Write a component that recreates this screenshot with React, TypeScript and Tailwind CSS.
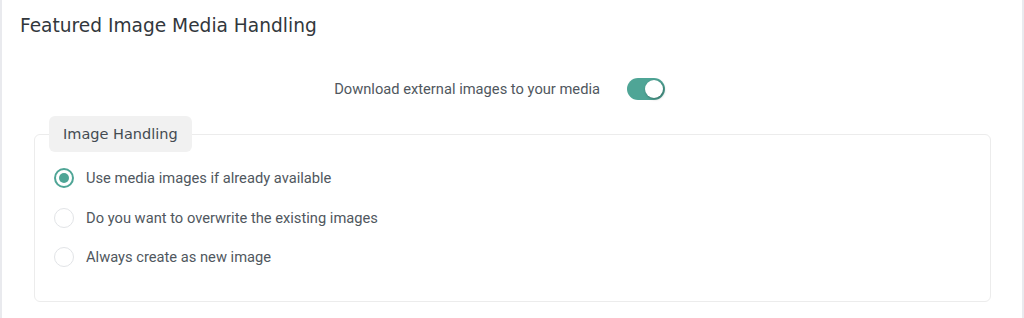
import React from 'react';

const options = [
  { id: 'use', label: 'Use media images if already available' },
  { id: 'overwrite', label: 'Do you want to overwrite the existing images' },
  { id: 'new', label: 'Always create as new image' },
];

const Radio: React.FC<{ checked: boolean }> = ({ checked }) =>
  checked ? (
    <span className="w-5 h-5 rounded-full border-2 border-[#4fa596] flex items-center justify-center shrink-0">
      <span className="w-[10px] h-[10px] rounded-full bg-[#4fa596]" />
    </span>
  ) : (
    <span className="w-5 h-5 rounded-full border border-[#e2e4e7] bg-white shrink-0" />
  );

export default function App() {
  const [selected, setSelected] = React.useState('use');
  const [download, setDownload] = React.useState(true);

  return (
    <div className="min-h-[318px] bg-white border-x-2 border-[#e9eaee] font-['Roboto',sans-serif] text-[#50575e]">
      <h2 className="pl-[18px] pt-[12px] text-[18.6px] leading-[28px] font-normal text-[#32373c] font-['DejaVu_Sans',sans-serif]">
        Featured Image Media Handling
      </h2>

      <div className="flex items-center mt-[38px]">
        <span className="w-[598px] text-right text-[14.7px] leading-[20px]">Download external images to your media</span>
        <button
          onClick={() => setDownload(!download)}
          className={`ml-[27px] w-[38px] h-[22px] rounded-full flex items-center px-[2px] ${download ? 'bg-[#4fa596] justify-end' : 'bg-[#d0d3d6] justify-start'}`}
        >
          <span className="w-[18px] h-[18px] rounded-full bg-white shadow-[1px_1px_3px_rgba(0,0,0,0.35)]" />
        </button>
      </div>

      <fieldset className="mt-[16px] ml-[32px] mr-[31px] border border-[#ececec] rounded-[6px] px-[14px] pb-[34px]">
        <legend className="bg-[#f1f1f1] rounded-[6px] px-[14px] h-[36px] leading-[36px] text-[14.5px] text-[#444b52] font-['DejaVu_Sans',sans-serif]">
          Image Handling
        </legend>
        <div className="flex flex-col gap-[19.5px] pl-[5px] pt-[16px]">
          {options.map((o) => (
            <label key={o.id} className="flex items-center gap-3 cursor-pointer" onClick={() => setSelected(o.id)}>
              <Radio checked={selected === o.id} />
              <span className="text-[14.7px] leading-[20px]">{o.label}</span>
            </label>
          ))}
        </div>
      </fieldset>
    </div>
  );
}
